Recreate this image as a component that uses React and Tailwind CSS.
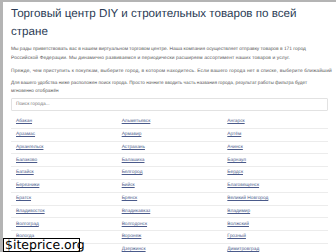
const cities = [
  'Абакан', 'Альметьевск', 'Ангарск',
  'Арзамас', 'Армавир', 'Артём',
  'Архангельск', 'Астрахань', 'Ачинск',
  'Балаково', 'Балашиха', 'Барнаул',
  'Батайск', 'Белгород', 'Бердск',
  'Березники', 'Бийск', 'Благовещенск',
  'Братск', 'Брянск', 'Великий Новгород',
  'Владивосток', 'Владикавказ', 'Владимир',
  'Волгоград', 'Волгодонск', 'Волжский',
  'Вологда', 'Воронеж', 'Грозный',
  'Дербент', 'Дзержинск', 'Димитровград',
];

export default function App() {
  return (
    <div
      className="relative w-[336px] h-[252px] overflow-hidden bg-white border-t-2 border-l-[3px] border-[#b4b4b4] [text-rendering:geometricPrecision]"
      style={{ fontFamily: "'Liberation Sans', Arial, sans-serif" }}
    >
      <div className="pl-[8px] pr-[8px] pt-[3px]">
        <h1 className="text-[11.6px] leading-[18px] text-[#2a3b55] font-normal">
          Торговый центр DIY и строительных товаров по всей стране
        </h1>
        <div className="mt-[4px] text-[4.85px] leading-[9px] text-[#555] space-y-[3.5px] whitespace-nowrap">
          <p>
            Мы рады приветствовать вас в нашем виртуальном торговом центре. Наша компания осуществляет отправку товаров в 171 город
            <br />
            <span className="tracking-[0.12px]">
              Российской Федерации. Мы динамично развиваемся и периодически расширяем ассортимент наших товаров и услуг.
            </span>
          </p>
          <p className="tracking-[0.17px]">
            Прежде, чем приступить к покупкам, выберите город, в котором находитесь. Если вашего города нет в списке, выберите ближайший
          </p>
          <p className="leading-[8px] text-[4.7px]">
            Для вашего удобства ниже расположен поиск города. Просто начните вводить часть названия города, результат работы фильтра будет
            <br />
            мгновенно отображён
          </p>
        </div>
        <div className="mt-[3px] h-[13px] border border-[#e2e2e2] flex items-center px-[4px] text-[4.8px] text-[#777] rounded-[1px]">
          Поиск города...
        </div>
        <div className="mt-[5px] grid grid-cols-3">
          {cities.map((c) => (
            <div key={c} className="h-[12.8px] border-b border-[#ececec] pl-[5px] flex items-center">
              <a className="text-[4.8px] text-[#4a5a8a] underline">{c}</a>
            </div>
          ))}
        </div>
      </div>
      <div
        className="absolute left-0 bottom-0 h-[14px] w-[77px] bg-white border border-black flex items-center pl-[1px] text-[12.5px] leading-none text-black"
        style={{ fontFamily: "'DejaVu Sans', sans-serif" }}
      >
        $iteprice.org
      </div>
    </div>
  );
}
